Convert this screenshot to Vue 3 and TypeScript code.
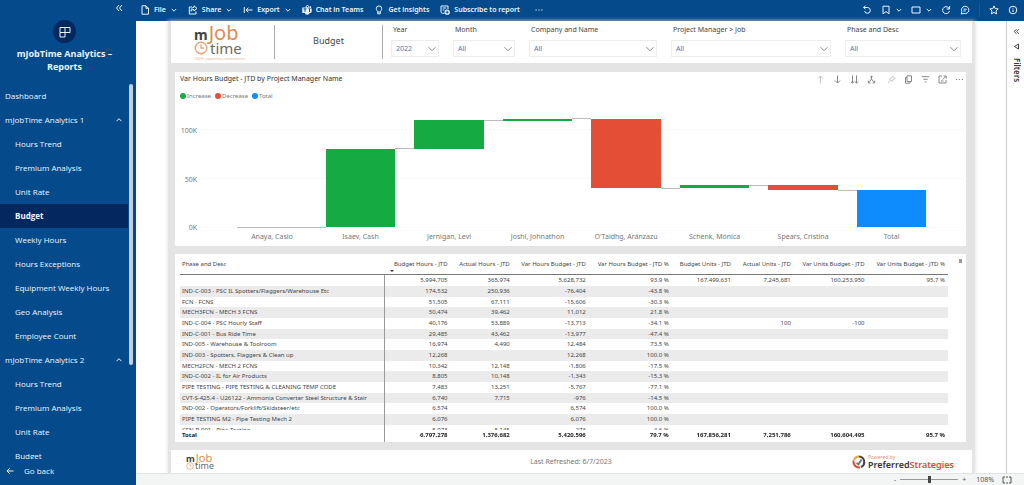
<script setup lang="ts">
import { ref } from 'vue'

interface NavGroup { title: string; open: boolean; items: string[] }
interface Slicer { id: string; label: string; value: string; grow: string }
interface Bar { name: string; from: number; to: number; kind: 'up' | 'down' | 'total' }

const active = ref('0-3')
const groups = ref<NavGroup[]>([
  {
    title: 'mJobTime Analytics 1',
    open: true,
    items: ['Hours Trend', 'Premium Analysis', 'Unit Rate', 'Budget', 'Weekly Hours', 'Hours Exceptions', 'Equipment Weekly Hours', 'Geo Analysis', 'Employee Count'],
  },
  {
    title: 'mJobTime Analytics 2',
    open: true,
    items: ['Hours Trend', 'Premium Analysis', 'Unit Rate', 'Budget'],
  },
])

const slicers: Slicer[] = [
  { id: 'year', label: 'Year', value: '2022', grow: 'w-year' },
  { id: 'month', label: 'Month', value: 'All', grow: 'w-month' },
  { id: 'company', label: 'Company and Name', value: 'All', grow: 'w-company' },
  { id: 'manager', label: 'Project Manager > Job', value: 'All', grow: 'w-manager' },
  { id: 'phase', label: 'Phase and Desc', value: 'All', grow: 'w-phase' },
]

const bars: Bar[] = [
  { name: 'Anaya, Casio', from: 0, to: 0.3, kind: 'up' },
  { name: 'Isaev, Cash', from: 0, to: 80.5, kind: 'up' },
  { name: 'Jernigan, Levi', from: 80.5, to: 109.5, kind: 'up' },
  { name: 'Joshi, Johnathon', from: 109, to: 111.2, kind: 'up' },
  { name: "O'Taidhg, Aránzazu", from: 111, to: 40, kind: 'down' },
  { name: 'Schenk, Mónica', from: 40, to: 43.4, kind: 'up' },
  { name: 'Spears, Cristina', from: 43.4, to: 38.2, kind: 'down' },
  { name: 'Total', from: 0, to: 38.2, kind: 'total' },
]
const ticks = [0, 50, 100]

const LEFT = 6.1
const BAND = 11.32
const BAR = 8.85
const y = (v: number) => 89.7 - v * 0.71
const barX = (i: number) => LEFT + i * BAND + (BAND - BAR) / 2
const pct = (n: number) => `${n.toFixed(2)}%`

const columns = ['Budget Hours - JTD', 'Actual Hours - JTD', 'Var Hours Budget - JTD', 'Var Hours Budget - JTD %', 'Budget Units - JTD', 'Actual Units - JTD', 'Var Units Budget - JTD', 'Var Units Budget - JTD %']
const rows: string[][] = [
  ['', '5,994,705', '365,974', '5,628,732', '93.9 %', '167,499,631', '7,245,681', '160,253,950', '95.7 %'],
  ['IND-C-003 - PSC IL Spotters/Flaggers/Warehouse Etc', '174,532', '250,936', '-76,404', '-43.8 %', '', '', '', ''],
  ['FCN - FCNS', '51,505', '67,111', '-15,606', '-30.3 %', '', '', '', ''],
  ['MECH3FCN - MECH 3 FCNS', '50,474', '39,462', '11,012', '21.8 %', '', '', '', ''],
  ['IND-C-004 - PSC Hourly Staff', '40,176', '53,889', '-13,713', '-34.1 %', '', '100', '-100', ''],
  ['IND-C-001 - Bus Ride Time', '29,485', '43,462', '-13,977', '-47.4 %', '', '', '', ''],
  ['IND-005 - Warehouse & Toolroom', '16,974', '4,490', '12,484', '73.5 %', '', '', '', ''],
  ['IND-003 - Spotters, Flaggers & Clean up', '12,268', '', '12,268', '100.0 %', '', '', '', ''],
  ['MECH2FCN - MECH 2 FCNS', '10,342', '12,148', '-1,806', '-17.5 %', '', '', '', ''],
  ['IND-C-002 - IL for Air Products', '8,805', '10,148', '-1,343', '-15.3 %', '', '', '', ''],
  ['PIPE TESTING - PIPE TESTING & CLEANING TEMP CODE', '7,483', '13,251', '-5,767', '-77.1 %', '', '', '', ''],
  ['CVT-S-425.4 - U26122 - Ammonia Converter Steel Structure & Stair', '6,740', '7,715', '-976', '-14.5 %', '', '', '', ''],
  ['IND-002 - Operators/Forklift/Skidsteer/etc', '6,574', '', '6,574', '100.0 %', '', '', '', ''],
  ['PIPE TESTING M2 - Pipe Testing Mech 2', '6,076', '', '6,076', '100.0 %', '', '', '', ''],
  ['CFN-P-001 - Pipe Testing', '5,973', '5,145', '273', '4.6 %', '', '', '', ''],
]
const totals = ['Total', '6,797,278', '1,376,682', '5,420,596', '79.7 %', '167,856,281', '7,251,786', '160,604,495', '95.7 %']
const zoom = ref(108)
</script>

<template>
  <div class="shell">
    <aside class="sidebar">
      <button class="collapse" aria-label="Collapse navigation">
        <svg width="8" height="8" viewBox="0 0 8 8"><path d="M4 1 1.500 4 4 7M7 1 4.500 4 7 7" /></svg>
      </button>
      <div class="brand">
        <span class="disc">
          <svg width="12" height="12" viewBox="0 0 12 12"><path d="M1 1.500H11V6.500H1ZM1 6.500V11H6V1.500" /></svg>
        </span>
        <h1>mJobTime Analytics – Reports</h1>
      </div>
      <nav class="nav">
        <div class="list">
          <a class="row" href="#dashboard">Dashboard</a>
          <template v-for="(g, gi) in groups" :key="g.title">
            <button class="row group" :aria-expanded="g.open" @click="g.open = !g.open">
              {{ g.title }}
              <svg width="6" height="6" viewBox="0 0 6 6" :class="{ flip: !g.open }"><path d="M.5 4.200 3 1.700 5.500 4.200" /></svg>
            </button>
            <template v-if="g.open">
              <a
                v-for="(item, ii) in g.items" :key="item" href="#report"
                class="row item" :class="{ active: active === `${gi}-${ii}` }"
                @click.prevent="active = `${gi}-${ii}`"
              >{{ item }}</a>
            </template>
          </template>
        </div>
        <div class="track"><div class="thumb"></div></div>
      </nav>
      <a class="back" href="#back">
        <svg width="8" height="8" viewBox="0 0 8 8"><path d="M7.500 4H1M3.700 1.300 1 4 3.700 6.700" /></svg>Go back
      </a>
    </aside>

    <div class="main">
      <header class="topbar">
        <button class="tool file">
          <svg width="10" height="10" viewBox="0 0 10 10"><path d="M2 .8H6L8.500 3.300V9.200H2ZM6 .8V3.300H8.500" /></svg>File
          <svg class="chev" width="6" height="6" viewBox="0 0 6 6"><path d="M.8 2 3 4.200 5.200 2" /></svg>
        </button>
        <button class="tool share">
          <svg width="10" height="10" viewBox="0 0 10 10"><path d="M4 2H1.300V9H8V6.500M6 .8 9 3.400 6 6V4.500C4.500 4.500 3.700 5 3 6.300 3 4 4 2.500 6 2.300Z" /></svg>Share
          <svg class="chev" width="6" height="6" viewBox="0 0 6 6"><path d="M.8 2 3 4.200 5.200 2" /></svg>
        </button>
        <button class="tool export">
          <svg width="10" height="10" viewBox="0 0 10 10"><path d="M1.300 2V8M9.500 5H3M5.300 2.700 3 5 5.300 7.300" /></svg>Export
          <svg class="chev" width="6" height="6" viewBox="0 0 6 6"><path d="M.8 2 3 4.200 5.200 2" /></svg>
        </button>
        <button class="tool teams">
          <svg width="10" height="10" viewBox="0 0 10 10"><circle cx="5.500" cy="1.700" r="1.200" /><circle class="solid" cx="8.300" cy="2.200" r=".9" /><path class="solid" d="M5.500 3.500H9.700V6.500A1.800 1.800 0 0 1 7.700 8 2.500 2.500 0 0 1 3 8.300V3.500ZM.3 2.500H5.700V8H.3Z" /><path class="mark" d="M1.500 3.900H4.500M3 3.900V6.800M7.500 3.700V7" /></svg>Chat in Teams
        </button>
        <button class="tool insights">
          <svg width="10" height="10" viewBox="0 0 10 10"><path d="M3.700 7C3.700 6 2.300 5.300 2.300 3.600A2.700 2.700 0 0 1 7.700 3.600C7.700 5.300 6.300 6 6.300 7ZM3.700 7V8.800H6.300V7" /></svg>Get insights
        </button>
        <button class="tool subscribe">
          <svg width="10" height="10" viewBox="0 0 10 10"><path d="M4.500 8.300H2.500A1.500 1.500 0 0 1 1 6.800V1H8V4M2.700 3H6.300M2.700 5H4.500" /><circle class="solid" cx="7.200" cy="7.200" r="2.600" /><path class="mark" d="M7.200 5.800V8.600M5.800 7.200H8.600" /></svg>Subscribe to report
        </button>
        <button class="tool more" aria-label="More options">
          <svg width="8" height="8" viewBox="0 0 8 8"><path d="M.5 4H1.700M3.400 4H4.600M6.300 4H7.500" /></svg>
        </button>
        <span class="spacer"></span>
        <div class="right">
          <button aria-label="Reset"><svg width="10" height="10" viewBox="0 0 10 10"><path d="M1.500 2.500H5.700A2.900 2.900 0 1 1 2.600 6M3.500.8 1.700 2.500 3.500 4.200" /></svg></button>
          <button class="pair" aria-label="Bookmarks"><svg width="10" height="10" viewBox="0 0 10 10"><path d="M2 1.200H8V8.800L5 6.600 2 8.800Z" /></svg><svg width="6" height="6" viewBox="0 0 6 6"><path d="M.8 2 3 4.200 5.200 2" /></svg></button>
          <button class="pair" aria-label="View"><svg width="10" height="10" viewBox="0 0 10 10"><path d="M1 2H9V8H1Z" /></svg><svg width="6" height="6" viewBox="0 0 6 6"><path d="M.8 2 3 4.200 5.200 2" /></svg></button>
          <button aria-label="Refresh"><svg width="10" height="10" viewBox="0 0 10 10"><path d="M8.400 4A3.500 3.500 0 1 0 8.500 6M8.600 1V4H5.700" /></svg></button>
          <button aria-label="Comments"><svg width="10" height="10" viewBox="0 0 10 10"><path d="M1.300 9 1.800 6.500A3.700 3.700 0 1 1 3.800 8.400ZM3.500 4.200H6.700M3.500 6H5.700" /></svg></button>
          <span class="rule"></span>
          <button aria-label="Favorite"><svg width="10" height="10" viewBox="0 0 10 10"><path d="M5 .9 6.200 3.600 9.200 3.900 7 5.900 7.600 8.900 5 7.400 2.400 8.900 3 5.900.8 3.900 3.800 3.600Z" /></svg></button>
          <button aria-label="Information"><svg width="10" height="10" viewBox="0 0 10 10"><circle cx="5" cy="5" r="3.800" /><path d="M5 4.500V7M5 2.800V3.600" /></svg></button>
        </div>
      </header>

      <div class="stage">
        <main class="canvas">
          <section class="head">
            <div class="logo">
              <div class="top"><b>m</b><span>Job</span></div>
              <div class="bottom">
                <svg viewBox="0 0 14 14"><circle cx="7" cy="7" r="5.800" /><path d="M7 3.500V7H10" /></svg><span>time</span>
              </div>
              <small>100% paperless timesheets</small>
            </div>
            <h2>Budget</h2>
            <div class="slicers">
              <div v-for="s in slicers" :key="s.id" class="slicer" :class="s.grow">
                <label :for="s.id">{{ s.label }}</label>
                <div class="box">
                  <select :id="s.id"><option>{{ s.value }}</option></select>
                  <svg width="8" height="8" viewBox="0 0 8 8"><path d="M.5 2.200 4 5.800 7.500 2.200" /></svg>
                </div>
              </div>
            </div>
          </section>

          <section class="card chart">
            <div class="chart-head">
              <h3>Var Hours Budget - JTD by Project Manager Name</h3>
              <div class="actions">
                <button class="dim" aria-label="Drill up"><svg width="9" height="9" viewBox="0 0 9 9"><path d="M4.500 8.500V1M2 3.500 4.500 1 7 3.500" /></svg></button>
                <button aria-label="Drill down"><svg width="9" height="9" viewBox="0 0 9 9"><path d="M4.500.5V8M2 5.500 4.500 8 7 5.500" /></svg></button>
                <button aria-label="Next level"><svg width="9" height="9" viewBox="0 0 9 9"><path d="M2.500.5V8M.8 6.500 2.500 8.200 4.200 6.500M6.500.5V8M4.800 6.500 6.500 8.200 8.200 6.500" /></svg></button>
                <button aria-label="Expand all"><svg width="9" height="9" viewBox="0 0 9 9"><path d="M4.500 1V4M4.500 4 1.800 7.500M4.500 4 7.200 7.500M1.300 5.700V8H3.500M7.700 5.700V8H5.500M3.300 2.200 4.500 1 5.700 2.200" /></svg></button>
                <button class="dim pin" aria-label="Pin visual"><svg width="9" height="9" viewBox="0 0 9 9"><path d="M5.500 1 8 3.500 6 4.500 5 6.500 2.500 4 4.500 3ZM3.500 5.300 1 8" /></svg></button>
                <button aria-label="Copy"><svg width="9" height="9" viewBox="0 0 9 9"><path d="M3 .8H7.500V6.500H3ZM3 2.300H1.500V8.200H6V6.500" /></svg></button>
                <button aria-label="Filters on visual"><svg width="9" height="9" viewBox="0 0 9 9"><path d="M.8 1.700H8.200M2.300 4.300H6.700M3.700 6.900H5.300" /></svg></button>
                <button aria-label="Focus mode"><svg width="9" height="9" viewBox="0 0 9 9"><path d="M4 1H1V8H8V5M5.500 1H8.200V3.700M8 1.200 4.700 4.500M3 6H5.500" /></svg></button>
                <button aria-label="More"><svg width="9" height="9" viewBox="0 0 9 9"><path d="M1 4.500H2.200M3.900 4.500H5.100M6.800 4.500H8" /></svg></button>
              </div>
            </div>
            <ul class="legend">
              <li class="up">Increase</li>
              <li class="down">Decrease</li>
              <li class="total">Total</li>
            </ul>
            <svg class="plot" role="img" aria-label="Waterfall chart of budget variance by project manager">
              <g v-for="t in ticks" :key="t">
                <line class="grid" x1="2.7%" x2="100%" :y1="pct(y(t))" :y2="pct(y(t))" />
                <text class="tick" x="2.2%" dy="3" :y="pct(y(t))">{{ t }}K</text>
              </g>
              <line
                v-for="(b, i) in bars.slice(0, -1)" :key="b.name" class="link"
                :x1="pct(i ? barX(i) + BAR : barX(0))" :x2="pct(barX(i + 1))" :y1="pct(y(b.to))" :y2="pct(y(b.to))"
              />
              <g v-for="(b, i) in bars" :key="b.name">
                <rect
                  :class="b.kind" :x="pct(barX(i))" :width="pct(BAR)"
                  :y="pct(y(Math.max(b.from, b.to)))" :height="pct(Math.abs(b.to - b.from) * 0.71)"
                />
                <text class="name" :x="pct(LEFT + (i + 0.5) * BAND)" y="98%">{{ b.name }}</text>
              </g>
            </svg>
          </section>

          <section class="card grid-card">
            <div class="scroller">
              <table>
                <colgroup><col class="c0"><col class="c1"><col class="c2"><col class="c3"><col class="c4"><col class="c5"><col class="c6"><col class="c7"><col></colgroup>
                <thead>
                  <tr>
                    <th scope="col">Phase and Desc</th>
                    <th v-for="(c, i) in columns" :key="c" scope="col" :class="{ sorted: i === 0 }">{{ c }}</th>
                  </tr>
                </thead>
                <tbody>
                  <tr v-for="(r, ri) in rows" :key="ri"><td v-for="(c, ci) in r" :key="ci">{{ c }}</td></tr>
                </tbody>
                <tfoot>
                  <tr><td v-for="(c, ci) in totals" :key="ci">{{ c }}</td></tr>
                </tfoot>
              </table>
            </div>
            <span class="mini-thumb"></span>
          </section>

          <footer class="foot">
            <div class="logo small">
              <div class="top"><b>m</b><span>Job</span></div>
              <div class="bottom">
                <svg viewBox="0 0 14 14"><circle cx="7" cy="7" r="5.800" /><path d="M7 3.500V7H10" /></svg><span>time</span>
              </div>
            </div>
            <p>Last Refreshed: 6/7/2023</p>
            <div class="partner">
              <svg width="14" height="14" viewBox="0 0 14 14">
                <path class="dark" d="M7 1.500A5.500 5.500 0 0 1 9 12" />
                <path class="amber" d="M2 5A5.500 5.500 0 0 1 7 1.500" />
                <path class="red" d="M8 12.400A5.500 5.500 0 0 1 1.700 5.500" />
                <path class="tick-mark" d="M4.500 8 6.500 9.300 9.500 4.500" />
              </svg>
              <div>
                <small>Powered by</small>
                <strong>Preferred<em>Strategies</em></strong>
              </div>
            </div>
          </footer>
        </main>

        <aside class="filters">
          <button aria-label="Expand filters"><svg width="7" height="7" viewBox="0 0 7 7"><path d="M3.500 1.200 1.200 3.500 3.500 5.800M6 1.200 3.700 3.500 6 5.800" /></svg></button>
          <svg width="7" height="7" viewBox="0 0 7 7"><path d="M5.500 1V6L1.500 3.500Z" /></svg>
          <span>Filters</span>
        </aside>
      </div>

      <div class="status">
        <button aria-label="Zoom out">-</button>
        <input v-model="zoom" type="range" min="8" max="208" aria-label="Zoom">
        <button aria-label="Zoom in">+</button>
        <output>{{ zoom }}%</output>
        <button class="fit" aria-label="Fit to page"><svg width="10" height="8" viewBox="0 0 10 8"><path d="M3 1H1V7H3M7 1H9V7H7M4 1H6M4 7H6" /></svg></button>
      </div>
    </div>
  </div>
</template>

<style>
html, body { margin: 0; }
</style>

<style scoped>
* { box-sizing: border-box; }
.shell {
  display: flex;
  height: 100vh;
  overflow: hidden;
  background: #fff;
  color: #444;
  font-family: "Noto Sans", "Open Sans", sans-serif;
  font-size: 6px;
}
button { margin: 0; padding: 0; border: 0; background: none; color: inherit; font: inherit; cursor: pointer; }
a { color: inherit; text-decoration: none; }
h1, h2, h3, p, ul { margin: 0; padding: 0; font-weight: 400; }
svg { flex: none; fill: none; stroke: currentColor; }

/* Navigation */
.sidebar {
  display: flex;
  flex: none;
  flex-direction: column;
  width: 136px;
  background: #054b8c;
  color: #eef4fb;
  font-family: "Open Sans", "Noto Sans", sans-serif;
  font-size: 8px;
}
.collapse { display: flex; align-self: flex-end; padding: 4px 13px 4px 0; height: 16px; }
.brand { display: flex; flex-direction: column; align-items: center; gap: 4px; padding: 4px 7px 0 0; height: 68px; }
.disc { display: grid; place-items: center; width: 23px; height: 23px; border-radius: 50%; background: #03275f; }
.disc svg { stroke-width: 1; }
h1 { width: 104px; font-size: 9px; font-weight: 700; line-height: 13px; text-align: center; }
.nav { display: flex; flex: 1; min-height: 0; }
.list { flex: 1; overflow: hidden; }
.row { display: flex; align-items: center; width: 100%; height: 24px; padding: 0 0 1px 5px; font-weight: 500; white-space: nowrap; }
.group { justify-content: space-between; padding-right: 6px; }
.flip { transform: rotate(180deg); }
.item { padding-left: 15px; }
.active { background: #03275f; font-weight: 700; }
.track { width: 8px; }
.thumb { width: 4px; height: 75%; margin-left: 1px; border-radius: 2px; background: #c3cfdb; }
.back { display: flex; align-items: center; gap: 10px; height: 26px; padding: 0 0 3px 6px; font-weight: 500; }

/* Command bar */
.main { display: flex; flex: 1; flex-direction: column; min-width: 0; }
.topbar {
  display: flex;
  flex: none;
  align-items: center;
  gap: 11px;
  height: 21px;
  padding: 0 6px 2px 4px;
  background: #054b8c;
  color: #eef4fb;
  font-size: 7px;
  font-weight: 600;
  white-space: nowrap;
}
.tool { display: flex; align-items: center; gap: 4px; }
.more { padding-left: 4px; }
.chev { margin-left: 1px; }
.solid { fill: #eef4fb; stroke: none; }
.mark { stroke: #054b8c; }
.spacer { flex: 1; }
.right { display: flex; align-items: center; gap: 9px; }
.right button { display: flex; }
.right .pair { align-items: center; gap: 5px; }
.rule { width: 1px; height: 14px; background: #1a5896; }

/* Report page */
.stage { display: flex; flex: 1; min-height: 0; }
.canvas {
  display: flex;
  flex: 1;
  flex-direction: column;
  min-width: 0;
  margin: 0 31px 0 32px;
  padding: 0 3px;
  background: #e4e4e4;
  box-shadow: 0 0 4px #ddd;
}
.head { display: flex; align-items: center; height: 42px; padding: 0 11px 0 23px; background: #fff; }
.logo { width: 49px; color: #6b6b6b; line-height: 1; }
.logo .top { display: flex; align-items: baseline; gap: 1px; height: 17px; font-size: 20px; line-height: 18px; }
.logo b { color: #444; font-size: 14px; }
.logo .top span { color: #e08b4d; }
.logo .bottom { display: flex; align-items: center; gap: 2px; height: 15px; font-size: 15px; line-height: 14px; }
.logo svg { width: 14px; height: 14px; stroke: #e3a577; stroke-width: 1.4; }
.logo small { display: block; color: #dfb696; font-size: 4px; line-height: 5px; white-space: nowrap; }
h2 { width: 109px; height: 34px; margin-left: 31px; border: solid #aaa; border-width: 0 1px; font-size: 9px; line-height: 32px; text-align: center; }
.slicers { display: flex; flex: 1; gap: 14px; min-width: 0; padding: 0 0 4px 8px; }
.slicer { min-width: 0; }
.w-year { flex: 48 1 0; }
.w-month { flex: 62 1 0; }
.w-company { flex: 128 1 0; }
.w-manager { flex: 160 1 0; }
.w-phase { flex: 116 1 0; }
.slicer label { display: block; padding: 1px 0 4px 2px; font-size: 7px; line-height: 12px; white-space: nowrap; }
.box { display: grid; align-items: center; }
.box > * { grid-area: 1 / 1; }
.box select { appearance: none; width: 100%; height: 17px; padding: 0 4px; border: 1px solid #ececec; border-radius: 0; background: #fff; color: #4a75b5; font: inherit; font-size: 7px; }
.box svg { justify-self: end; margin-right: 3px; stroke: #888; pointer-events: none; }

.card { margin: 0 6px 0 4px; border-radius: 1px; background: #fff; }
.chart { display: flex; flex: 171 1 0; flex-direction: column; min-height: 0; margin-top: 9px; padding: 0 4px 4px 5px; }
.chart-head { display: flex; justify-content: space-between; height: 16px; }
h3 { color: #333; font-size: 7px; line-height: 14px; white-space: nowrap; }
.actions { display: flex; align-items: center; gap: 8px; height: 15px; margin-right: -2px; color: #888; }
.actions button { display: flex; }
.actions .pin { margin-left: 3px; }
.dim { opacity: .5; }
.legend { display: flex; gap: 4px; height: 16px; list-style: none; color: #777; }
.legend li { display: flex; align-items: center; gap: 1px; }
.legend li::before { content: ""; width: 6px; height: 6px; border-radius: 50%; background: #16ab42; }
.legend .down::before { background: #e44e37; }
.legend .total::before { background: #0e8bfd; }
.plot { flex: 1; width: 100%; min-height: 0; }
.plot line, .plot rect { shape-rendering: crispEdges; }
.plot text { stroke: none; fill: #777; font-size: 7px; }
.grid { stroke: #ececec; stroke-dasharray: 1 3; }
.link { stroke: #bbb; }
.tick { text-anchor: end; }
.name { text-anchor: middle; }
.plot rect { stroke: none; }
rect.up { fill: #16ab42; }
rect.down { fill: #e44e37; }
rect.total { fill: #0e8bfd; }

.grid-card { display: flex; flex: 190 1 0; gap: 11px; min-height: 0; margin-top: 8px; padding: 0 4px 0 5px; }
.scroller { flex: 1; overflow: hidden; }
table { width: 100%; border-spacing: 0; table-layout: fixed; }
.c0 { width: 26.7%; }
.c1 { width: 8.4%; }
.c2 { width: 8.1%; }
.c3 { width: 9.9%; }
.c4 { width: 10.8%; }
.c5 { width: 8.1%; }
.c6 { width: 7.8%; }
.c7 { width: 9.6%; }
th, td { padding: 0 2px 0 0; text-align: right; font-weight: 400; white-space: nowrap; line-height: 10px; }
th:first-child, td:first-child { padding-left: 2px; text-align: left; }
th:last-child, td:last-child { padding-right: 3px; }
th { position: relative; height: 21px; border-bottom: 1px solid #777; }
.sorted::after { content: ""; position: absolute; bottom: 2px; left: 5px; border: solid transparent; border-width: 2px 2px 0; border-top-color: #333; }
td { height: 11px; }
tbody tr:nth-child(3n) td { height: 10px; }
tbody tr:nth-child(even) { background: #ebebeb; }
td:first-child { overflow: hidden; border-right: 1px solid #999; }
tfoot { position: sticky; bottom: 0; background: #fff; color: #222; }
tfoot td { height: 12px; font-weight: 700; vertical-align: top; }
.mini-thumb { width: 3px; height: 4px; margin-top: 5px; background: #999; }

.foot { display: flex; flex: none; align-items: center; justify-content: space-between; height: 23px; margin-top: 8px; padding: 0 18px 0 15px; background: #fff; }
.logo.small { width: 104px; }
.small .top { height: 9px; font-size: 11px; line-height: 10px; }
.small b { font-size: 9px; }
.small .bottom { gap: 1px; height: 9px; font-size: 9px; line-height: 8px; }
.small svg { width: 8px; height: 8px; }
.foot p { color: #777; font-size: 7px; }
.partner { display: flex; align-items: center; gap: 2px; }
.partner svg { stroke-width: 2; }
.dark { stroke: #444; }
.amber { stroke: #e9a33a; }
.red { stroke: #de4a2e; }
.tick-mark { stroke: #777; }
.partner div { display: grid; }
.partner small { color: #e2917f; font-size: 5px; line-height: 6px; }
.partner strong { color: #333; font-size: 9px; font-weight: 600; line-height: 10px; }
.partner em { color: #de4a2e; font-style: normal; }

.filters { display: flex; flex: none; flex-direction: column; align-items: center; gap: 8px; width: 18px; padding: 7px 0 0 2px; border-left: 1px solid #ccc; color: #444; }
.filters button { display: flex; }
.filters span { color: #333; font-size: 8px; font-weight: 600; line-height: 10px; writing-mode: vertical-rl; }

.status { display: flex; flex: none; align-items: center; justify-content: flex-end; gap: 4px; height: 12px; padding-right: 12px; border-top: 1px solid #e2e4e4; background: #f3f5f5; color: #555; font-size: 7px; line-height: 10px; }
.status input { appearance: none; width: 58px; height: 10px; margin: 0; background: linear-gradient(#999, #999) center / 100% 1px no-repeat; }
.status input::-webkit-slider-thumb { appearance: none; width: 3px; height: 7px; background: #444; }
.status output { margin-left: 6px; }
.fit { display: flex; margin-left: 4px; }
</style>
